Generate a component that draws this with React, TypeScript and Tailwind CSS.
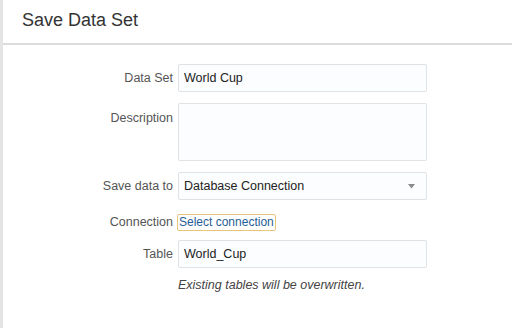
export default function App() {
  return (
    <div className="flex h-[328px] w-[512px] bg-white font-['Liberation_Sans',Arial,sans-serif] text-[#333]">
      <div className="w-[3px] shrink-0 bg-[#e4e4e4]" />
      <div className="flex flex-1 flex-col">
        <header className="flex h-[45px] items-center border-b-2 border-[#dcdcdc] pl-[19px] pb-[3px]">
          <h1 className="text-[18px] leading-none text-[#333]">Save Data Set</h1>
        </header>
        <form className="grid grid-cols-[170px_249px] gap-x-[5px] pt-[19px] text-[12.5px]">
          <label className="flex h-[28px] items-center justify-end text-[#555]">Data Set</label>
          <div className="flex h-[28px] items-center rounded-[2px] border border-[#dfe3e6] bg-[#fcfdfe] px-[5px] text-[#222]">
            World Cup
          </div>

          <label className="mt-[11px] flex justify-end pt-[6px] text-[#555]">Description</label>
          <div className="mt-[11px] h-[58px] rounded-[2px] border border-[#dfe3e6] bg-[#fcfdfe]" />

          <label className="mt-[11px] flex h-[28px] items-center justify-end text-[#555]">Save data to</label>
          <div className="mt-[11px] flex h-[28px] items-center justify-between rounded-[2px] border border-[#dfe3e6] bg-[#fcfdfe] px-[5px] text-[#222]">
            <span>Database Connection</span>
            <svg width="7" height="5" viewBox="0 0 7 5" className="mr-[6px]">
              <path d="M0 0H7L3.5 4.5Z" fill="#8a8a8a" />
            </svg>
          </div>

          <label className="mt-[13px] flex h-[18px] items-center justify-end text-[#555]">Connection</label>
          <div className="mt-[13px] -ml-[1px] flex h-[18px] items-center">
            <a className="rounded-[2px] border border-[#e8c57d] px-[1px] text-[12px] leading-[15px] text-[#1f5d96]">Select connection</a>
          </div>

          <label className="mt-[9px] flex h-[28px] items-center justify-end text-[#555]">Table</label>
          <div className="mt-[9px] flex h-[28px] items-center rounded-[2px] border border-[#dfe3e6] bg-[#fcfdfe] px-[5px] text-[#222]">
            World_Cup
          </div>

          <div />
          <p className="mt-[8px] text-[12.5px] italic text-[#444]">Existing tables will be overwritten.</p>
        </form>
      </div>
    </div>
  );
}
